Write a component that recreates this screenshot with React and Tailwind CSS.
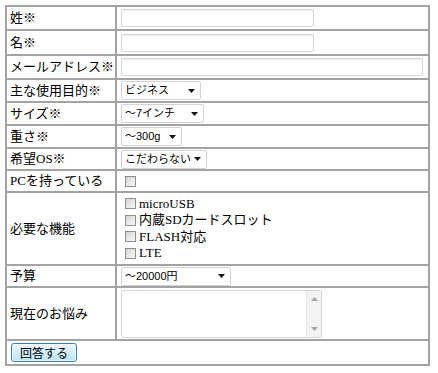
import React from 'react';

const labelFont = { fontFamily: '"Liberation Serif", "Noto Sans CJK JP", serif' };
const ctrlFont = { fontFamily: '"Liberation Sans", "Noto Sans CJK JP", sans-serif' };

const Arrow = () => (
  <svg width="7" height="4" viewBox="0 0 7 4" className="shrink-0">
    <path d="M0 0 H7 L3.5 4 Z" fill="#111" />
  </svg>
);

const FakeSelect = ({ value, width }) => (
  <div
    className="flex items-center justify-between gap-[3px] h-[19px] border border-[#d2d2d2] rounded-[2px] bg-white pl-[3px] pr-[5px] text-[11px] text-black"
    style={{ ...ctrlFont, width }}
  >
    <span className="whitespace-nowrap">{value}</span>
    <Arrow />
  </div>
);

const Check = () => (
  <span className="inline-block w-[11px] h-[11px] border border-[#8e8f8f] bg-gradient-to-br from-[#d6d6d6] to-[#f8f8f8] shrink-0" />
);

const TextBox = ({ width }) => (
  <div
    className="h-[18px] border border-[#d4d4d4] rounded-[2px] bg-white shadow-[inset_0_1px_1px_rgba(0,0,0,0.06)]"
    style={{ width }}
  />
);

const Row = ({ label, height, first, children }) => (
  <div
    className={`flex ${first ? '' : 'border-t-2 border-[#a3a3a3]'}`}
    style={{ height }}
  >
    <div className="w-[110px] shrink-0 border-r-2 border-[#a3a3a3] flex items-center pl-[3px] text-[13px] text-black whitespace-nowrap">
      {label}
    </div>
    <div className="flex-1 flex items-center pl-[4px]">{children}</div>
  </div>
);

const features = ['microUSB', '内蔵SDカードスロット', 'FLASH対応', 'LTE'];

const App = () => {
  return (
    <div className="w-[438px] h-[373px] bg-white pt-[5px] pl-[5px]" style={labelFont}>
      <div className="w-[425px] border-2 border-[#a3a3a3]">
        <Row label="姓※" height={22} first>
          <TextBox width={193} />
        </Row>
        <Row label="名※" height={25}>
          <TextBox width={193} />
        </Row>
        <Row label="メールアドレス※" height={24}>
          <TextBox width={302} />
        </Row>
        <Row label="主な使用目的※" height={23}>
          <FakeSelect value="ビジネス" width={80} />
        </Row>
        <Row label="サイズ※" height={23}>
          <FakeSelect value="～7インチ" width={83} />
        </Row>
        <Row label="重さ※" height={23}>
          <FakeSelect value="～300g" width={61} />
        </Row>
        <Row label="希望OS※" height={22}>
          <FakeSelect value="こだわらない" width={86} />
        </Row>
        <Row label="PCを持っている" height={22}>
          <div className="pl-[4px] flex items-center">
            <Check />
          </div>
        </Row>
        <Row label="必要な機能" height={73}>
          <div className="flex flex-col pl-[4px] text-[13px] leading-[16.5px] text-black">
            {features.map((f) => (
              <label key={f} className="flex items-center gap-[3px]">
                <Check />
                <span>{f}</span>
              </label>
            ))}
          </div>
        </Row>
        <Row label="予算" height={22}>
          <FakeSelect value="～20000円" width={110} />
        </Row>
        <Row label="現在のお悩み" height={53}>
          <div className="w-[201px] h-[48px] border border-[#d4d4d4] rounded-[2px] bg-white flex justify-end">
            <div className="w-[15px] h-full bg-[#f3f3f3] border-l border-[#e6e6e6] flex flex-col items-center justify-between py-[6px]">
              <svg width="7" height="4" viewBox="0 0 7 4">
                <path d="M0 4 H7 L3.5 0 Z" fill="#a6a6a6" />
              </svg>
              <svg width="7" height="4" viewBox="0 0 7 4">
                <path d="M0 0 H7 L3.5 4 Z" fill="#a6a6a6" />
              </svg>
            </div>
          </div>
        </Row>
        <div className="h-[25px] border-t-2 border-[#a3a3a3] flex items-center pl-[4px]">
          <button
            type="button"
            className="h-[19px] w-[66px] border border-[#3c7fb1] rounded-[3px] bg-gradient-to-b from-[#eaf6fd] to-[#bee6fd] text-[12px] text-black leading-none shadow-[inset_0_0_0_1px_rgba(255,255,255,0.6)]"
            style={{ fontFamily: '"Noto Sans CJK JP", sans-serif' }}
          >
            回答する
          </button>
        </div>
      </div>
    </div>
  );
};

export default App;
